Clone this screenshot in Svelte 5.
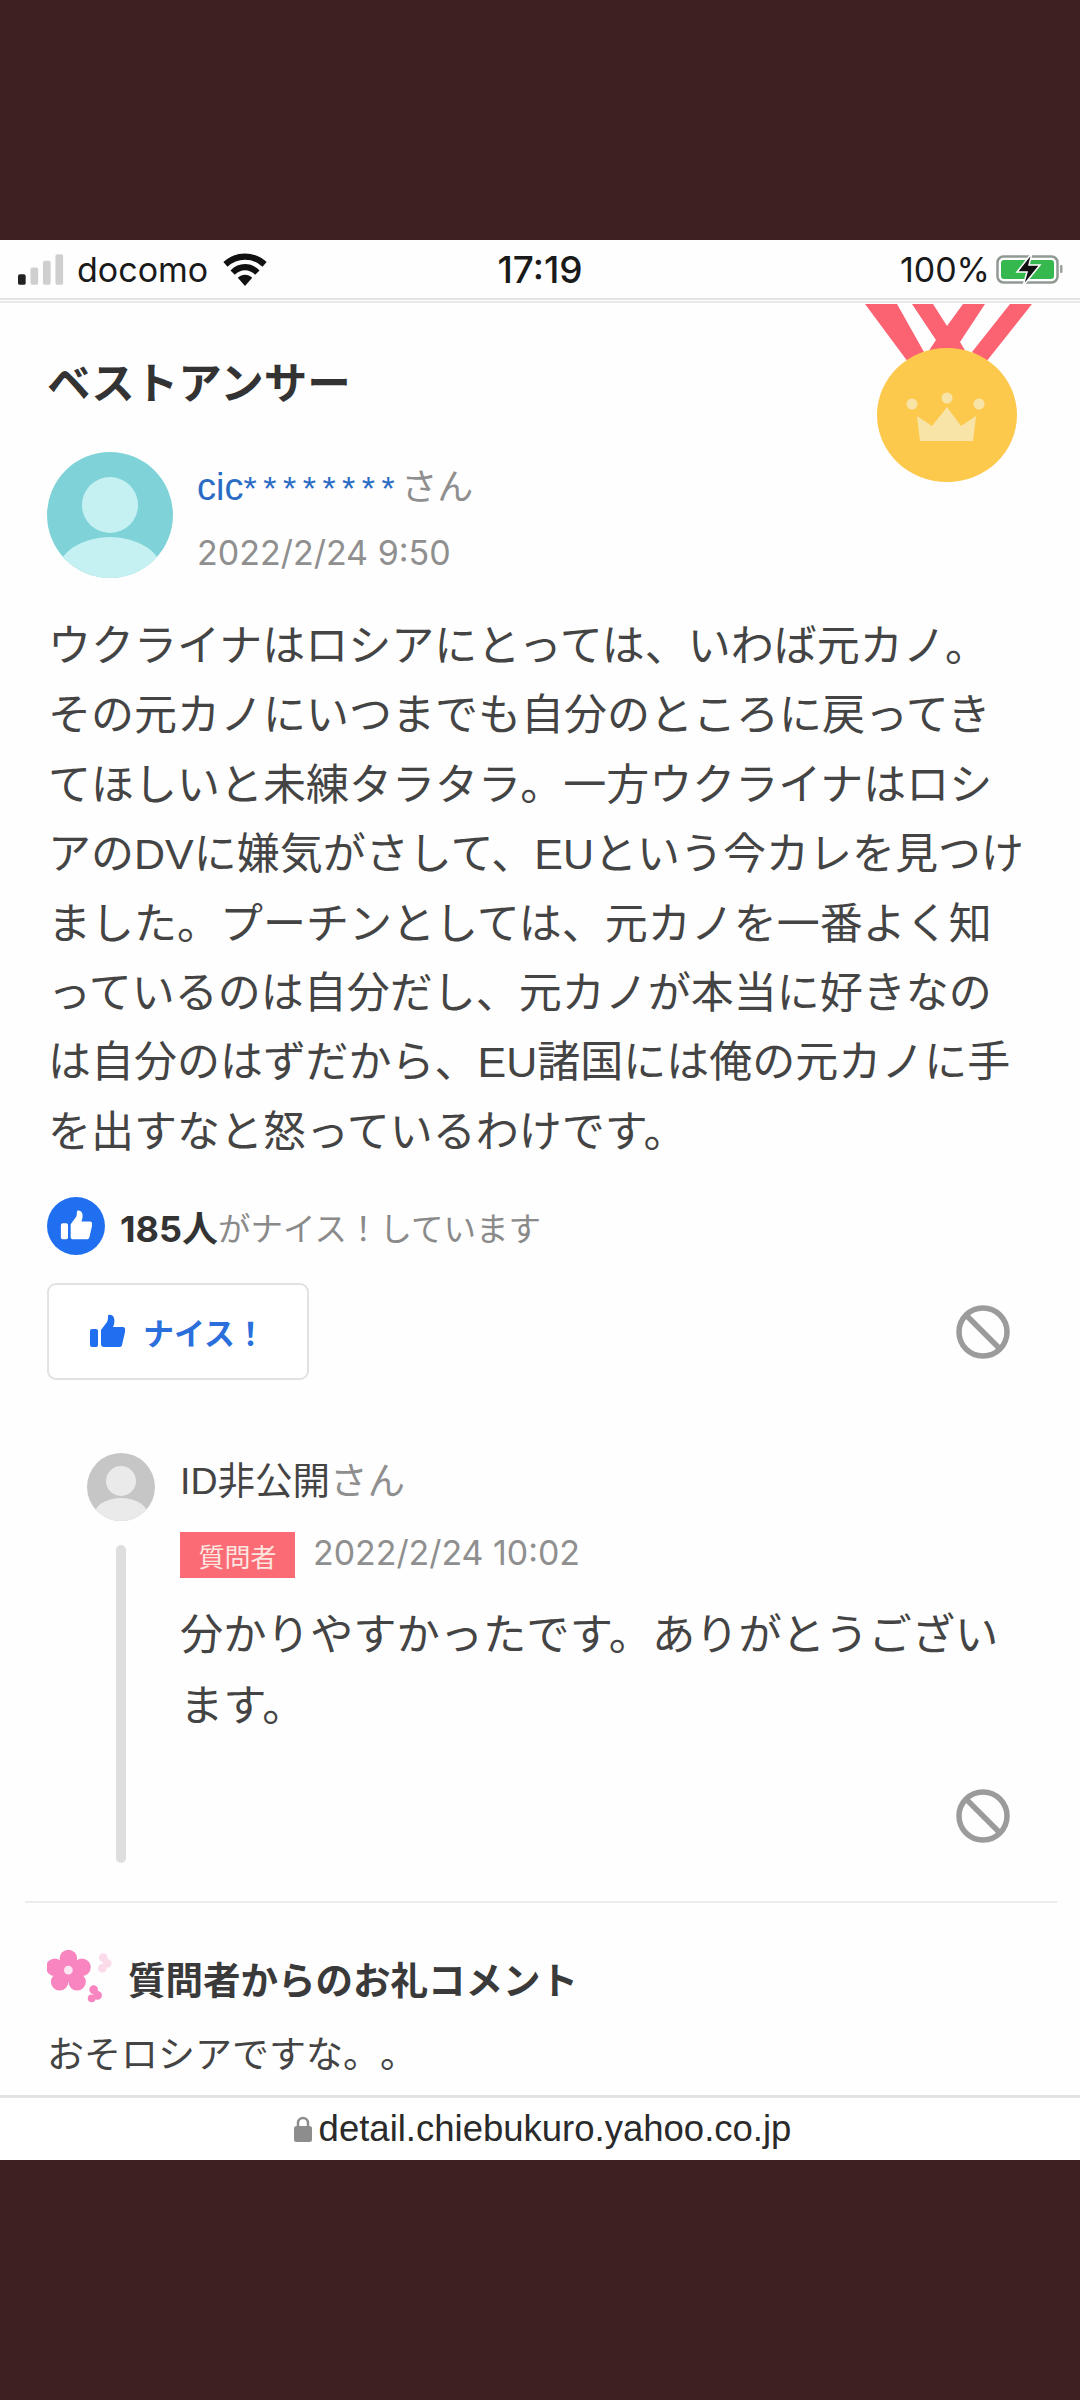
<script>
  const lines = [
    'ウクライナはロシアにとっては、いわば元カノ。',
    'その元カノにいつまでも自分のところに戻ってき',
    'てほしいと未練タラタラ。一方ウクライナはロシ',
    'アのDVに嫌気がさして、EUという今カレを見つけ',
    'ました。プーチンとしては、元カノを一番よく知',
    'っているのは自分だし、元カノが本当に好きなの',
    'は自分のはずだから、EU諸国には俺の元カノに手',
    'を出すなと怒っているわけです。'
  ];
</script>

{#snippet ban()}
  <svg class="ban" viewBox="0 0 54 54" aria-hidden="true">
    <circle cx="27" cy="27" r="24" fill="none" stroke="#9b9b9b" stroke-width="5.5" />
    <path d="M10.5 10.5 43.5 43.5" stroke="#9b9b9b" stroke-width="5.5" />
  </svg>
{/snippet}

{#snippet thumb(color, cls)}
  <svg class={cls} viewBox="0 0 36 36" aria-hidden="true">
    <rect x="1" y="15" width="8" height="18" rx="2" fill={color} />
    <path d="M12 16 18 8c1-2 1-4 1-6 0-2 5-2 6 2 1 3 0 7-1 9h9c3 0 4 2 3 5l-3 13c-.5 2-2 2-3 2H15c-2 0-3-1-3-3z" fill={color} />
  </svg>
{/snippet}

<div class="screen">
  <div class="band"></div>

  <header class="status">
    <div class="left">
      <svg class="signal" viewBox="0 0 50 34" aria-hidden="true">
        <rect x="0" y="22" width="8" height="11" rx="2" fill="#222" />
        <rect x="13" y="15" width="8" height="18" rx="2" fill="#cfcfcf" />
        <rect x="26" y="8" width="8" height="25" rx="2" fill="#cfcfcf" />
        <rect x="39" y="1" width="8" height="32" rx="2" fill="#cfcfcf" />
      </svg>
      <span class="carrier">docomo</span>
      <svg class="wifi" viewBox="0 0 44 34" aria-hidden="true">
        <path d="M3 12C14 2 30 2 41 12" fill="none" stroke="#111" stroke-width="6" />
        <path d="M10 20C17 13 27 13 34 20" fill="none" stroke="#111" stroke-width="6" />
        <path d="M15 25C19 21 25 21 29 25L22 33z" fill="#111" />
      </svg>
    </div>
    <div class="time">17:19</div>
    <div class="right">
      <span>100%</span>
      <svg class="battery" viewBox="0 0 68 34" aria-hidden="true">
        <rect x="1.5" y="4.5" width="60" height="26" rx="6" fill="none" stroke="#8f9a92" stroke-width="2.5" />
        <rect x="5" y="8" width="53" height="19" rx="3" fill="#35b94f" />
        <rect x="64" y="13" width="2.5" height="8" rx="1" fill="#9aa09c" />
        <path d="M36 1 21 20h10l-4 14 17-21H33z" fill="#111" stroke="#fff" stroke-width="1.5" />
      </svg>
    </div>
  </header>

  <main class="content">
    <svg class="medal" viewBox="860 304 180 186" aria-hidden="true">
      <polygon points="865,304 897,304 924,352 908,362" fill="#fb6272" />
      <polygon points="912,304 933,304 947,326 963,304 985,304 960,342 966,352 928,352 936,340" fill="#fb6272" />
      <polygon points="1010,304 1032,304 986,362 972,352" fill="#fb6272" />
      <ellipse cx="947" cy="415" rx="70" ry="67" fill="#fcc94d" />
      <circle cx="912" cy="404" r="5.5" fill="#f9e4a8" />
      <circle cx="947" cy="398" r="5.5" fill="#f9e4a8" />
      <circle cx="979" cy="404" r="5.5" fill="#f9e4a8" />
      <polygon points="917,416 932,426 947,407 961,426 976,416 973,441 920,441" fill="#f9e4a8" />
    </svg>

    <h2 class="title">ベストアンサー</h2>

    <div class="author">
      <svg class="avatar" viewBox="0 0 126 126" aria-hidden="true">
        <defs><clipPath id="c1"><circle cx="63" cy="63" r="63" /></clipPath></defs>
        <g clip-path="url(#c1)">
          <rect width="126" height="126" fill="#7fd3d8" />
          <ellipse cx="63" cy="53" rx="28" ry="28" fill="#c6f1f3" />
          <ellipse cx="63" cy="120" rx="52" ry="35" fill="#c6f1f3" />
        </g>
      </svg>
      <div class="meta">
        <div class="name"><span class="blue">cic<span class="stars">********</span></span><span class="san">さん</span></div>
        <div class="date">2022/2/24 9:50</div>
      </div>
    </div>

    <p class="body">
      {#each lines as line}<span class="line">{line}</span>{/each}
    </p>

    <div class="nice-row">
      <span class="nice-dot">{@render thumb('#fff', 'dot-thumb')}</span>
      <span class="count">185人</span><span class="nice-label">がナイス！しています</span>
    </div>

    <div class="actions">
      <button class="nice-btn">{@render thumb('#1f6ff0', 'btn-thumb')}<span>ナイス！</span></button>
      {@render ban()}
    </div>

    <section class="reply">
      <div class="rail">
        <svg class="avatar-sm" viewBox="0 0 68 68" aria-hidden="true">
          <defs><clipPath id="c2"><circle cx="34" cy="34" r="34" /></clipPath></defs>
          <g clip-path="url(#c2)">
            <rect width="68" height="68" fill="#c6c6c6" />
            <ellipse cx="34" cy="28" rx="15" ry="15" fill="#eaeaea" />
            <ellipse cx="34" cy="64" rx="28" ry="19" fill="#eaeaea" />
          </g>
        </svg>
        <div class="bar"></div>
      </div>
      <div class="reply-main">
        <div class="reply-name">ID非公開<span class="san">さん</span></div>
        <div class="reply-meta"><span class="tag">質問者</span><span class="date">2022/2/24 10:02</span></div>
        <p class="reply-text"><span class="line">分かりやすかったです。ありがとうござい</span><span class="line">ます。</span></p>
        <div class="reply-foot">{@render ban()}</div>
      </div>
    </section>

    <hr class="divider" />

    <div class="thanks">
      <svg class="flower" viewBox="0 0 70 54" aria-hidden="true">
        <g fill="#f884c0">
          <circle cx="22" cy="9" r="9" /><circle cx="36" cy="18" r="9" /><circle cx="31" cy="33" r="9" />
          <circle cx="13" cy="33" r="9" /><circle cx="8" cy="18" r="9" />
          <circle cx="22" cy="21" r="12" />
        </g>
        <circle cx="22" cy="21" r="4.5" fill="#fde7f2" />
        <g fill="#fbdbe9"><circle cx="58" cy="8" r="4.5" /><circle cx="62" cy="14" r="4.5" /><circle cx="57" cy="19" r="4.5" /></g>
        <g fill="#f884c0"><circle cx="48" cy="41" r="4.5" /><circle cx="52" cy="47" r="4.5" /><circle cx="46" cy="50" r="4" /></g>
      </svg>
      <h3>質問者からのお礼コメント</h3>
    </div>
    <p class="comment">おそロシアですな。。</p>
  </main>

  <footer class="url">
    <svg class="lock" viewBox="0 0 18 26" aria-hidden="true">
      <path d="M4 11V7a5 5 0 0 1 10 0v4" fill="none" stroke="#8d8d8d" stroke-width="2.5" />
      <rect x="0" y="10" width="18" height="16" rx="2.5" fill="#8d8d8d" />
    </svg>
    <span>detail.chiebukuro.yahoo.co.jp</span>
  </footer>

  <div class="band"></div>
</div>

<style>
  :global(body) { margin: 0; background: #3f2022; }
  .screen {
    width: 1080px;
    height: 2400px;
    display: flex;
    flex-direction: column;
    overflow: hidden;
    font-family: "Liberation Sans", "Noto Sans CJK JP", sans-serif;
    text-spacing-trim: space-all;
    color: #333;
    background: #fefefe;
  }
  .band { height: 240px; flex: none; background: #3f2022; }

  .status {
    flex: none;
    height: 58px;
    display: grid;
    grid-template-columns: 1fr auto 1fr;
    align-items: center;
    padding: 0 18px;
    border-bottom: 2px solid #e4e4e4;
    font-family: "Inter", "Liberation Sans", sans-serif;
    font-size: 34px;
    color: #1a1a1a;
  }
  .left, .right { display: flex; align-items: center; }
  .right { justify-content: flex-end; gap: 8px; }
  .signal { width: 48px; height: 33px; }
  .carrier { margin-left: 11px; }
  .wifi { width: 46px; height: 35px; margin-left: 14px; }
  .time { font-weight: 500; font-size: 37px; }
  .right span { margin-right: -2px; }
  .battery { width: 68px; height: 34px; margin-right: -2px; }

  .content {
    position: relative;
    flex: 1;
    min-height: 0;
    overflow: hidden;
    padding: 51px 70px 0 47px;
    border-top: 2px solid #e9e9e9;
    margin: 1px 0 0;
  }
  .medal { position: absolute; left: 860px; top: 1px; width: 180px; height: 186px; }

  .title { margin: 0; font-size: 43.5px; line-height: 60px; font-weight: 600; color: #333; }

  .author { display: flex; gap: 25px; margin-top: 38px; }
  .avatar { width: 126px; height: 126px; flex: none; }
  .meta { padding-top: 10px; margin-left: -1px; }
  .name { font-size: 36px; line-height: 50px; }
  .blue { font-size: 38px; color: #2a6cc4; }
  .stars { letter-spacing: 6.5px; font-size: 34px; }
  .san { color: #8f8f8f; }
  .date { font-family: "Inter", "Liberation Sans", sans-serif; font-size: 34px; line-height: 45px; color: #8f8f8f; }
  .meta .date { margin-top: 17px; }

  .body { margin: 34px -30px 0 1px; font-size: 43px; line-height: 69.4px; color: #444; }
  .line { display: block; white-space: nowrap; }

  .nice-row { display: flex; align-items: center; height: 58px; margin-top: 30px; font-size: 32.5px; }
  .nice-dot {
    width: 58px;
    height: 58px;
    border-radius: 50%;
    background: #1f6ff0;
    display: flex;
    align-items: center;
    justify-content: center;
    margin-right: 15px;
  }
  :global(.dot-thumb) { width: 32px; height: 32px; }
  .count { font-family: "Inter", "Noto Sans CJK JP", sans-serif; font-weight: 700; font-size: 36px; color: #333; }
  .nice-label { color: #8a8a8a; }

  .actions { display: flex; justify-content: space-between; align-items: center; margin-top: 28px; }
  .nice-btn {
    width: 262px;
    height: 97px;
    box-sizing: border-box;
    display: flex;
    align-items: center;
    gap: 18px;
    padding: 0 0 0 40px;
    background: #fff;
    border: 2px solid #e2e2e2;
    border-radius: 9px;
    font: 600 31px "Liberation Sans", "Noto Sans CJK JP", sans-serif;
    color: #2a6fdc;
  }
  :global(.btn-thumb) { width: 36px; height: 36px; flex: none; }
  .ban { width: 54px; height: 54px; display: block; }

  .reply { display: flex; gap: 25px; margin: 73px 0 0 40px; height: 410px; }
  .rail { width: 68px; flex: none; display: flex; flex-direction: column; align-items: center; }
  .avatar-sm { width: 68px; height: 68px; flex: none; }
  .bar { width: 10px; flex: 1; margin-top: 24px; border-radius: 5px; background: #dedede; }
  .reply-main { flex: 1; min-width: 0; }
  .reply-name { font-size: 37.5px; line-height: 54px; color: #444; padding-top: 1px; }
  .reply-meta { display: flex; align-items: flex-start; gap: 18px; margin-top: 24px; height: 46px; }
  .reply-meta .date { font-size: 33.9px; line-height: 42px; }
  .tag {
    width: 115px;
    height: 46px;
    display: flex;
    align-items: center;
    justify-content: center;
    background: #fb6b76;
    color: #fde5df;
    font-size: 26px;
  }
  .reply-text { margin: 22px -30px 0 0; font-size: 43.3px; line-height: 71px; color: #444; }
  .reply-foot { display: flex; justify-content: flex-end; margin-top: 47px; }

  .divider { height: 2px; margin: 38px -47px 0 -22px; border: 0; background: #ececec; }

  .thanks { display: flex; align-items: flex-start; gap: 13px; margin-top: 46px; height: 54px; }
  .flower { width: 68px; height: 54px; flex: none; }
  .thanks h3 { margin: 5px 0 0; font-size: 37.5px; font-weight: 600; color: #3a3a3a; line-height: 54px; }
  .comment { margin: 28px 0 0; font-size: 37px; line-height: 50px; color: #444; }

  .url {
    flex: none;
    height: 62px;
    border-top: 3px solid #e3e3e3;
    display: flex;
    align-items: center;
    justify-content: center;
    gap: 7px;
    padding-left: 5px;
    font-size: 36.5px;
    color: #2a2a2a;
    background: #fff;
  }
  .lock { width: 18px; height: 26px; }
</style>
